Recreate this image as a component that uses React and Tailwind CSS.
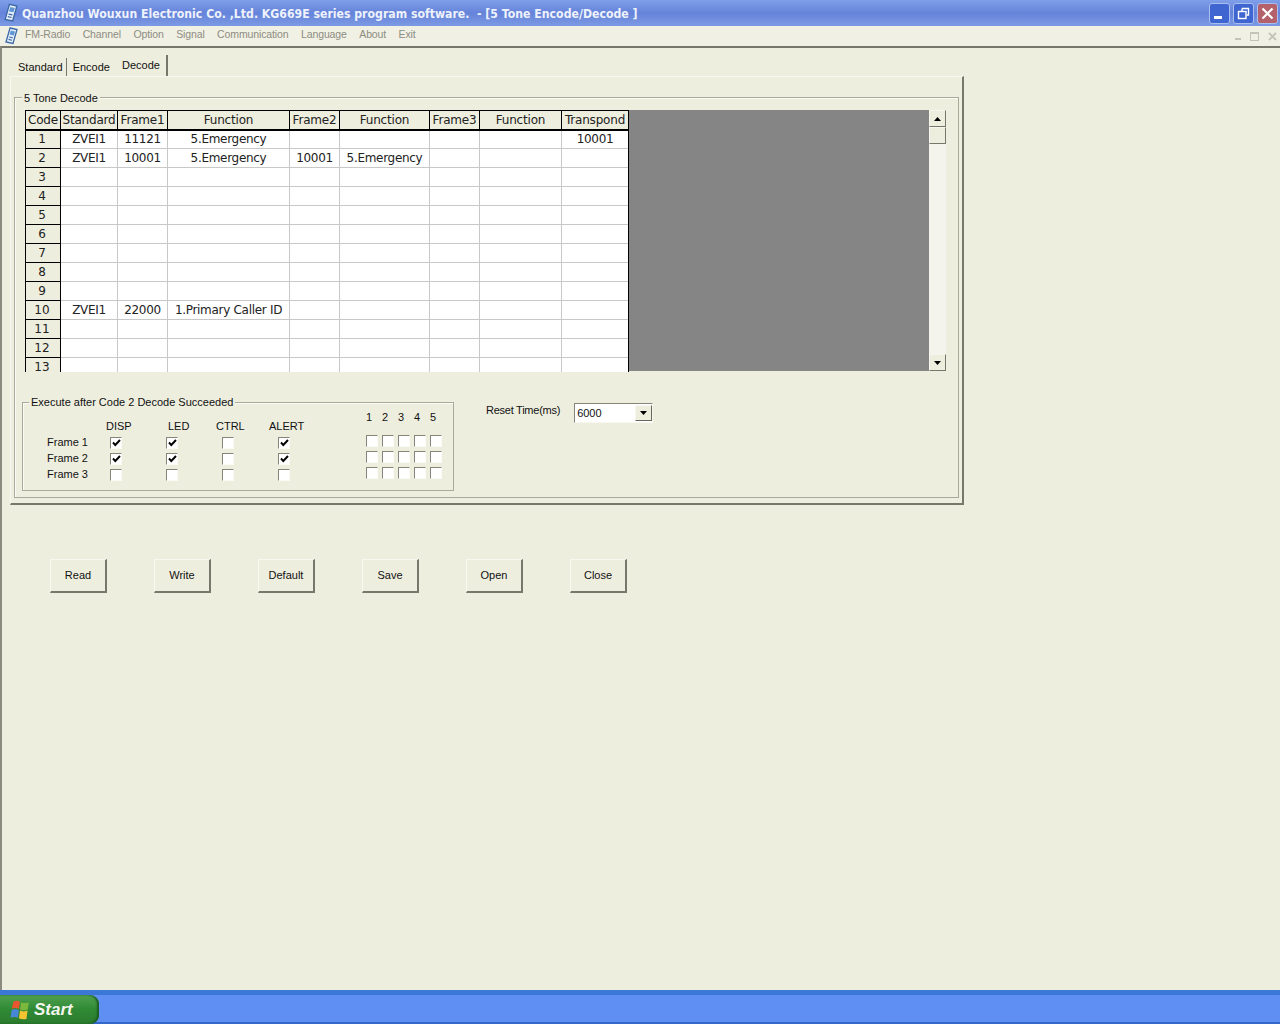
import React from 'react';

const menus = ['FM-Radio', 'Channel', 'Option', 'Signal', 'Communication', 'Language', 'About', 'Exit'];
const columns = [
  ['Code', 'w-[35px]'],
  ['Standard', 'w-[57px]'],
  ['Frame1', 'w-[50px]'],
  ['Function', 'w-[122px]'],
  ['Frame2', 'w-[50px]'],
  ['Function', 'w-[90px]'],
  ['Frame3', 'w-[50px]'],
  ['Function', 'w-[82px]'],
  ['Transpond', 'w-[67px]'],
];
const rows = {
  1: ['ZVEI1', '11121', '5.Emergency', '', '', '', '', '10001'],
  2: ['ZVEI1', '10001', '5.Emergency', '10001', '5.Emergency', '', '', ''],
  10: ['ZVEI1', '22000', '1.Primary Caller ID', '', '', '', '', ''],
};
const frames = [
  ['Frame 1', [true, true, false, true]],
  ['Frame 2', [true, true, false, true]],
  ['Frame 3', [false, false, false, false]],
];
const buttons = ['Read', 'Write', 'Default', 'Save', 'Open', 'Close'];

const AppIcon = ({ className }) => (
  <svg viewBox="0 0 14 18" className={className}>
    <path d="M6 1 L13 2.5 L9 16.5 L2 15 Z" fill="#e6eef8" stroke="#3b69a8" strokeWidth="1.3" />
    <path d="M6.8 3.5 L11 4.4 L9.8 8.4 L5.6 7.5 Z" fill="#5f97d6" />
    <path d="M5.2 10 L8.8 10.8 M4.5 12.4 L8 13.2" stroke="#3b69a8" strokeWidth="1.1" />
  </svg>
);

const Arrow = ({ up }) => (
  <svg viewBox="0 0 7 4" className="h-[4px] w-[7px]">
    <path d={up ? 'M3.5 0 L7 4 L0 4 Z' : 'M0 0 L7 0 L3.5 4 Z'} fill="#000" />
  </svg>
);

const ScrollButton = ({ children }) => (
  <div className="flex h-[17px] w-[17px] items-center justify-center border border-[#f7f6ee] border-r-[#77776c] border-b-[#77776c] bg-[#eeeedf]">
    {children}
  </div>
);

const Checkbox = ({ checked }) => (
  <div className="flex h-[12px] w-[12px] items-center justify-center border border-[#85857a] border-r-[#fbfbf5] border-b-[#fbfbf5] bg-white">
    {checked && (
      <svg viewBox="0 0 9 8" className="h-[8px] w-[9px]">
        <path d="M1 3.5 L3.3 6 L8 1" fill="none" stroke="#000" strokeWidth="1.9" />
      </svg>
    )}
  </div>
);

const WinButton = ({ children, className }) => (
  <div className={`flex h-[21px] w-[21px] items-center justify-center rounded-[3px] border border-[#a9bff0] ${className}`}>
    {children}
  </div>
);

const StartLogo = () => (
  <svg viewBox="0 0 18 18" className="h-[20px] w-[20px]">
    <path d="M3 1.5 Q6 0 9 1.5 L8 8 Q5 6.5 1.5 8 Z" fill="#e8552f" />
    <path d="M10 2 Q13 3.5 17 2 L16 8.5 Q12.5 10 9 8.5 Z" fill="#7cb83c" />
    <path d="M1.5 9 Q5 7.5 8 9 L7 16 Q4 14.5 0.5 16 Z" fill="#4a86d8" />
    <path d="M9 9.5 Q12.5 11 15.8 9.5 L14.8 17 Q11 18 8 16.5 Z" fill="#f3c332" />
  </svg>
);

export default function App() {
  return (
    <div className="flex h-screen w-[1280px] flex-col overflow-hidden bg-[#eeeedf] font-['Liberation_Sans',sans-serif] text-[11px] text-[#111]">
      {/* Title bar */}
      <div className="flex h-[26px] shrink-0 items-center bg-gradient-to-b from-[#7f9fea] via-[#6583d9] to-[#7d9ae4] pr-[2px] pl-[3px]">
        <AppIcon className="h-[20px] w-[15px]" />
        <span className="ml-[4px] origin-left font-['DejaVu_Sans',sans-serif] text-[13px] leading-none font-bold whitespace-pre text-[#eef2fb] [transform:scaleX(0.842)]">
          Quanzhou Wouxun Electronic Co. ,Ltd. KG669E series program software.  - [5 Tone Encode/Decode ]
        </span>
        <div className="ml-auto flex gap-[3px]">
          <WinButton className="bg-[#3f65d0]">
            <div className="mt-[8px] mr-[4px] h-[3px] w-[8px] bg-white" />
          </WinButton>
          <WinButton className="bg-[#3f65d0]">
            <svg viewBox="0 0 13 13" className="h-[13px] w-[13px]">
              <path d="M5 1.5 H11.5 V8 H9.5 M5 1.5 V4" fill="none" stroke="#fff" strokeWidth="1.4" />
              <rect x="1.5" y="4.5" width="7.5" height="7" fill="none" stroke="#fff" strokeWidth="1.4" />
            </svg>
          </WinButton>
          <WinButton className="bg-[#b4616b]">
            <svg viewBox="0 0 13 13" className="h-[13px] w-[13px]">
              <path d="M1.5 1.5 L11.5 11.5 M11.5 1.5 L1.5 11.5" stroke="#fff" strokeWidth="2.2" />
            </svg>
          </WinButton>
        </div>
      </div>

      {/* Menu bar */}
      <div className="flex h-[20px] shrink-0 items-center bg-[#f1f0e4] text-[#8d8d82]">
        <AppIcon className="ml-[4px] h-[18px] w-[14px]" />
        <div className="mb-[2px] ml-[7px] flex gap-[12.5px] text-[10.5px] tracking-[-0.12px]">
          {menus.map((m) => (
            <span key={m}>{m}</span>
          ))}
        </div>
        <div className="mr-[3px] ml-auto flex items-center gap-[9px]">
          <div className="mt-[5px] h-[2px] w-[6px] bg-[#c4c4b8]" />
          <div className="h-[9px] w-[9px] border border-t-2 border-[#c4c4b8]" />
          <svg viewBox="0 0 9 9" className="h-[9px] w-[9px]">
            <path d="M1 1 L8 8 M8 1 L1 8" stroke="#c4c4b8" strokeWidth="1.8" />
          </svg>
        </div>
      </div>

      {/* Client area */}
      <div className="flex min-h-0 flex-1 flex-col border-t-2 border-l-2 border-t-[#77776c] border-l-[#8b8b80] pl-[8px]">
        {/* Tabs */}
        <div className="mt-[8px] flex h-[20px] items-center">
          <div className="mt-[3px] ml-[8px] flex h-[19px] items-center border-r border-[#77776c] pr-[3px]">Standard</div>
          <div className="mt-[3px] ml-[6px] flex h-[19px] items-center pr-[12px]">Encode</div>
          <div className="mb-[1px] flex h-[21px] items-center border-r-2 border-[#77776c] pr-[6px]">Decode</div>
        </div>

        {/* Tab panel */}
        <div className="h-[429px] w-[954px] border-t border-r-2 border-b-2 border-l border-t-[#f8f8f0] border-r-[#77776c] border-b-[#77776c] border-l-[#f8f8f0] pt-[20px] pl-[3px]">
          <div className="relative h-[401px] w-[945px] border border-[#a9a99c] pt-[12px] pl-[10px] shadow-[inset_1px_1px_0_#fbfbf4]">
            <span className="absolute -top-[7px] left-[7px] bg-[#eeeedf] px-[2px] leading-[14px]">5 Tone Decode</span>

            {/* Grid + scrollbar */}
            <div className="flex h-[262px] w-[922px]">
              <div className="h-[262px] w-[604px] shrink-0 overflow-hidden border-r border-black bg-white">
                <table className="w-[603px] table-fixed border-collapse font-['DejaVu_Sans',sans-serif] text-[12px] leading-none text-[#222]">
                  <colgroup>
                    {columns.map(([name, w], i) => (
                      <col key={i} className={w} />
                    ))}
                  </colgroup>
                  <thead>
                    <tr className="h-[19px]">
                      {columns.map(([name], i) => (
                        <th key={i} className="border-x border-t border-b-2 border-black bg-[#eeeedf] p-0 text-center font-normal tracking-[-0.2px] whitespace-nowrap">
                          {name}
                        </th>
                      ))}
                    </tr>
                  </thead>
                  <tbody>
                    {Array.from({ length: 13 }, (_, i) => i + 1).map((code) => (
                      <tr key={code} className="h-[19px]">
                        <td className="border border-black bg-[#eeeedf] p-0 pr-[2px] text-center">{code}</td>
                        {(rows[code] || ['', '', '', '', '', '', '', '']).map((val, j) => (
                          <td key={j} className="border border-[#c8c8c8] p-0 text-center tracking-[-0.3px] whitespace-nowrap">
                            {val}
                          </td>
                        ))}
                      </tr>
                    ))}
                  </tbody>
                </table>
              </div>
              <div className="h-[261px] w-[300px] shrink-0 bg-[#858585]" />
              <div className="flex h-[261px] w-[17px] shrink-0 flex-col bg-[#f5f4ec]">
                <ScrollButton>
                  <Arrow up />
                </ScrollButton>
                <ScrollButton />
                <div className="flex-1" />
                <ScrollButton>
                  <Arrow />
                </ScrollButton>
              </div>
            </div>

            {/* Lower section */}
            <div className="mt-[30px] -ml-[3px] flex">
              <div className="relative h-[89px] w-[432px] border border-[#a9a99c] shadow-[inset_1px_1px_0_#fbfbf4]">
                <span className="absolute -top-[8px] left-[6px] bg-[#eeeedf] px-[2px] leading-[14px] whitespace-nowrap">Execute after Code 2 Decode Succeeded</span>
                <div className="flex">
                  <div className="mt-[15px] ml-[24px] grid w-[265px] grid-cols-[41px_repeat(4,56px)] items-center">
                    <div className="h-[16px]" />
                    <div className="h-[16px] pl-[18px]">DISP</div>
                    <div className="h-[16px] pl-[24px]">LED</div>
                    <div className="h-[16px] pl-[16px]">CTRL</div>
                    <div className="h-[16px] pl-[13px]">ALERT</div>
                    {frames.map(([label, checks]) => (
                      <React.Fragment key={label}>
                        <div className="h-[16px] leading-[16px] whitespace-nowrap">{label}</div>
                        {checks.map((c, i) => (
                          <div key={i} className="flex h-[16px] items-center justify-center pt-[2px]">
                            <Checkbox checked={c} />
                          </div>
                        ))}
                      </React.Fragment>
                    ))}
                  </div>
                  <div className="mt-[7px] ml-[49px]">
                    <div className="grid grid-cols-[repeat(5,16px)] text-center">
                      {[1, 2, 3, 4, 5].map((n) => (
                        <span key={n} className="leading-[14px]">{n}</span>
                      ))}
                    </div>
                    <div className="mt-[11px] ml-[5px] grid grid-cols-[repeat(5,16px)] gap-y-[4px]">
                      {Array.from({ length: 15 }).map((_, i) => (
                        <Checkbox key={i} />
                      ))}
                    </div>
                  </div>
                </div>
              </div>
              <span className="mt-[1px] ml-[32px] leading-[14px] tracking-[-0.25px]">Reset Time(ms)</span>
              <div className="mt-[1px] ml-[14px] flex h-[20px] w-[79px] items-center border border-[#85857a] border-r-[#f8f8f0] border-b-[#f8f8f0] bg-white pl-[2px]">
                <span>6000</span>
                <div className="ml-auto flex h-[16px] w-[17px] items-center justify-center border border-[#f8f8f0] border-r-[#66665c] border-b-[#66665c] bg-[#eeeedf]">
                  <Arrow />
                </div>
              </div>
            </div>
          </div>
        </div>

        {/* Action buttons */}
        <div className="mt-[54px] ml-[40px] flex gap-[47px]">
          {buttons.map((b) => (
            <button key={b} className="flex h-[34px] w-[57px] items-center justify-center border border-r-2 border-b-2 border-[#f8f8f0] border-r-[#77776c] border-b-[#77776c] bg-[#eeeedf]">
              {b}
            </button>
          ))}
        </div>
      </div>

      {/* Taskbar */}
      <div className="flex h-[34px] shrink-0 border-t-[5px] border-b-2 border-t-[#3a77d6] border-b-[#3468c8] bg-[#5f8ff2]">
        <div className="flex h-[29px] w-[99px] items-center rounded-r-[9px] bg-gradient-to-b from-[#4fa04f] via-[#2f8a35] to-[#2b7a2e] pl-[10px] shadow-[inset_-2px_0_2px_#1c5c20]">
          <StartLogo />
          <span className="ml-[4px] text-[17px] font-bold text-[#f3f5ee] italic">Start</span>
        </div>
      </div>
    </div>
  );
}
